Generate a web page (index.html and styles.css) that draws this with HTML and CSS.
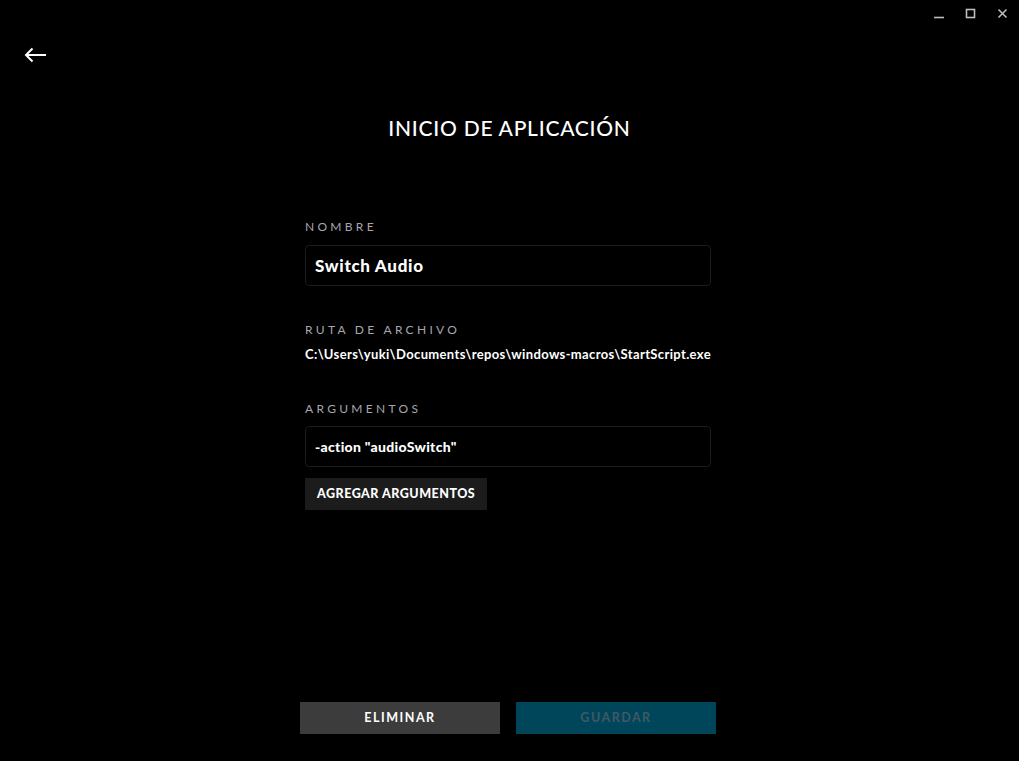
FILE: index.html
```html
<!DOCTYPE html>
<html lang="es">
<head>
<meta charset="utf-8">
<link rel="stylesheet" href="styles.css">
</head>
<body>
<div class="app">
  <div class="titlebar">
    <span class="winbtn"><svg width="12" height="12" viewBox="0 0 12 12"><path d="M1 9.5h10" stroke="#bdbdbd" stroke-width="1.6"/></svg></span>
    <span class="winbtn"><svg width="12" height="12" viewBox="0 0 12 12"><rect x="1.5" y="1.5" width="8" height="8" fill="none" stroke="#bdbdbd" stroke-width="1.6"/></svg></span>
    <span class="winbtn"><svg width="12" height="12" viewBox="0 0 12 12"><path d="M1.5 1.5l8 8M9.5 1.5l-8 8" stroke="#bdbdbd" stroke-width="1.6"/></svg></span>
  </div>
  <div class="backrow">
    <svg class="back" width="24" height="16" viewBox="0 0 24 16"><path d="M23 8H3M9.5 1.5L3 8l6.5 6.5" fill="none" stroke="#fff" stroke-width="2"/></svg>
  </div>
  <h1 class="title">INICIO DE APLICACIÓN</h1>
  <div class="form">
    <div class="label">NOMBRE</div>
    <div class="field name">Switch Audio</div>
    <div class="label mt">RUTA DE ARCHIVO</div>
    <div class="path">C:\Users\yuki\Documents\repos\windows-macros\StartScript.exe</div>
    <div class="label mt2">ARGUMENTOS</div>
    <div class="field args">-action "audioSwitch"</div>
    <div class="addrow"><span class="add">AGREGAR ARGUMENTOS</span></div>
  </div>
  <div class="spacer"></div>
  <div class="actions">
    <span class="btn del">ELIMINAR</span>
    <span class="btn save">GUARDAR</span>
  </div>
</div>
</body>
</html>
```
FILE: styles.css
```css
html, body {
  margin: 0;
  padding: 0;
  background: #000;
  height: 100%;
}
.app {
  height: 761px;
  display: flex;
  flex-direction: column;
  font-family: Lato, "Open Sans", sans-serif;
  color: #fff;
}
.titlebar {
  display: flex;
  justify-content: flex-end;
  gap: 20px;
  padding: 8px 10px 0 0;
  height: 22px;
}
.winbtn {
  width: 12px;
  height: 12px;
  display: flex;
}
.backrow {
  padding: 17px 0 0 23px;
  height: 17px;
}
.back { display: block; }
.title {
  margin: 52px 0 0;
  text-align: center;
  font-size: 21px;
  font-weight: 500;
  letter-spacing: 0.75px;
  line-height: 24px;
}
.form {
  width: 406px;
  margin: 80px 0 0 calc(50% - 204.5px);
  display: flex;
  flex-direction: column;
}
.label {
  font-size: 12px;
  letter-spacing: 3.3px;
  color: #a8a6b0;
  line-height: 14px;
}
.mt { margin-top: 37px; }
.mt2 { margin-top: 40px; }
.field {
  margin-top: 11px;
  height: 39px;
  border: 1px solid #1c1c1c;
  border-radius: 4px;
  display: flex;
  align-items: center;
  padding-left: 9px;
  font-weight: 900;
}
.name { font-size: 17px; letter-spacing: 0.7px; }
.args { font-size: 14px; letter-spacing: 0.3px; margin-top: 10px; }
.path {
  margin-top: 9px;
  font-size: 13px;
  font-weight: 700;
  letter-spacing: 0.36px;
  line-height: 16px;
  white-space: nowrap;
}
.addrow {
  display: flex;
  margin-top: 11px;
}
.add {
  background: #1c1c1c;
  font-size: 12.5px;
  font-weight: 900;
  letter-spacing: 0.5px;
  padding: 0 12px;
  height: 32px;
  line-height: 32px;
}
.spacer { flex: 1; }
.actions {
  display: flex;
  justify-content: center;
  gap: 16px;
  padding-right: 3px;
  margin-bottom: 27px;
}
.btn {
  width: 200px;
  height: 32px;
  line-height: 31px;
  text-align: center;
  font-size: 12.5px;
  font-weight: 700;
  letter-spacing: 1.5px;
}
.del { background: #3c3c3c; color: #fff; }
.save { background: #00465a; color: #3f5963; }
```
